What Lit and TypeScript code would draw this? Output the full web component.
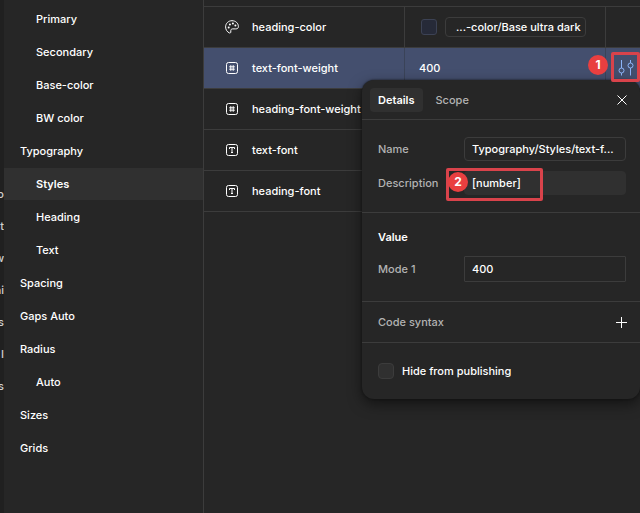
import { LitElement, html, svg, css } from "lit";
import { customElement, state } from "lit/decorators.js";
import { classMap } from "lit/directives/class-map.js";

type Kind = "color" | "number" | "string";

interface Group {
  name: string;
  nested?: boolean;
}

interface Variable {
  kind: Kind;
  name: string;
  value: string;
  alias?: boolean;
}

const GROUPS: Group[] = [
  { name: "Primary", nested: true },
  { name: "Secondary", nested: true },
  { name: "Base-color", nested: true },
  { name: "BW color", nested: true },
  { name: "Typography" },
  { name: "Styles", nested: true },
  { name: "Heading", nested: true },
  { name: "Text", nested: true },
  { name: "Spacing" },
  { name: "Gaps Auto" },
  { name: "Radius" },
  { name: "Auto", nested: true },
  { name: "Sizes" },
  { name: "Grids" },
];

const VARIABLES: Variable[] = [
  { kind: "color", name: "heading-color", value: "...-color/Base ultra dark", alias: true },
  { kind: "number", name: "text-font-weight", value: "400" },
  { kind: "number", name: "heading-font-weight", value: "" },
  { kind: "string", name: "text-font", value: "" },
  { kind: "string", name: "heading-font", value: "" },
];

const LAYERS = ["o", "nt", "w", "ai", "s", "I", "s"];

const box = svg`<rect x="1.5" y="1.5" width="11" height="11" rx="2" />`;

const KIND_ICONS = {
  color: svg`
    <path d="M7 .7C3.400 .7 .6 3.400 .6 6.900c0 2.700 1.500 5 3.700 6 .8.400 1.500-.1 1.500-.9v-1.400c0-1 .7-1.700 1.700-1.700h3.300c1.500 0 2.600-.8 2.600-2.300C13.400 3.200 10.600 .7 7 .7z" />
    <g class="dots"><circle cx="3.700" cy="7.400" r="1" /><circle cx="4.900" cy="4.500" r="1" /><circle cx="7.900" cy="3.500" r="1" /><circle cx="10.400" cy="5.600" r="1" /></g>`,
  number: svg`${box}<path d="M5.800 4.200v5.600M8.200 4.200v5.600M4.200 5.800h5.600M4.200 8.200h5.600" />`,
  string: svg`${box}<path d="M4.500 6V4.500h5V6M7 4.500v5M6 9.500h2" />`,
};

@customElement("app-root")
export class AppRoot extends LitElement {
  @state() private group = "Styles";
  @state() private selected = "text-font-weight";

  static styles = css`
    :host {
      display: grid;
      grid-template-columns: 4px 200px minmax(0, 1fr);
      position: relative;
      min-height: 100vh;
      overflow: hidden;
      background: #262626;
      color: #fff;
      font: 500 11px/16px Inter, "Liberation Sans", sans-serif;
    }
    * { box-sizing: border-box; }
    button, input {
      font: inherit;
      color: inherit;
      margin: 0;
      border: 0;
      background: none;
      padding: 0;
    }
    svg {
      display: block;
      fill: none;
      stroke: currentColor;
    }
    .canvas {
      background: #202020;
      color: #d0d0d0;
      overflow: hidden;
      padding-top: 178px;
    }
    .layer {
      display: flex;
      justify-content: flex-end;
      height: 32px;
      align-items: center;
    }
    .groups {
      display: flex;
      flex-direction: column;
      gap: 1px;
      padding-top: 3px;
      border-right: 1px solid #3c3c3c;
    }
    .group {
      height: 32px;
      padding-left: 16px;
      text-align: left;
    }
    .group.nested { padding-left: 32px; }
    .group.current {
      background: #303030;
      font-weight: 600;
    }
    .table {
      width: 100%;
      border-collapse: separate;
      border-spacing: 0;
      table-layout: fixed;
    }
    .table-wrap { padding-top: 6px; }
    .col { width: 46.1%; }
    .cell {
      height: 41px;
      padding: 0 0 0 21px;
      border-bottom: 1px solid #3c3c3c;
      border-right: 1px solid #3c3c3c;
      text-align: left;
      font-weight: inherit;
      white-space: nowrap;
    }
    .cell.value { padding-left: 14px; }
    .cell.action {
      border-right: 0;
      padding-left: 12px;
    }
    .top { border-top: 1px solid #3c3c3c; height: 42px; }
    .selected .cell {
      background: #444f6e;
      border-right-color: #3a4358;
    }
    .line {
      display: flex;
      align-items: center;
    }
    .line.named { gap: 13px; }
    .line.alias { gap: 8px; padding-left: 2px; }
    .dots { fill: currentColor; stroke: none; }
    .swatch {
      width: 16px;
      height: 16px;
      border: 1px solid #3c4254;
      border-radius: 3px;
      background: #262a38;
    }
    .chip {
      height: 20px;
      padding: 0 4px 0 10px;
      border: 1px solid #3c3c3c;
      border-radius: 4px;
      line-height: 18px;
    }
    .tune { display: block; color: #8db4f8; }
    .details {
      position: absolute;
      top: 80px;
      right: 0;
      width: 278px;
      border-radius: 12px;
      background: #262626;
      box-shadow: 0 0 2px #111, 0 5px 14px rgba(0, 0, 0, 0.5);
    }
    .tabs {
      display: flex;
      align-items: center;
      gap: 5px;
      height: 40px;
      padding: 0 12px 0 8px;
      border-bottom: 1px solid #3c3c3c;
    }
    .tab {
      height: 24px;
      padding: 0 8px;
      border-radius: 4px;
      color: #b3b3b3;
    }
    .tab.current {
      background: #303030;
      color: #fff;
      font-weight: 600;
    }
    .close { margin-left: auto; }
    .section {
      display: flex;
      flex-direction: column;
      padding: 0 14px 0 16px;
      border-bottom: 1px solid #3c3c3c;
    }
    .section.identity { gap: 10px; padding-top: 17px; padding-bottom: 17px; }
    .section.values { gap: 11px; padding-top: 16px; padding-bottom: 19px; }
    .section.syntax {
      flex-direction: row;
      align-items: center;
      justify-content: space-between;
      height: 41px;
      padding-right: 12px;
    }
    .section.publish {
      border: 0;
      height: 56px;
      justify-content: center;
    }
    .field {
      display: grid;
      grid-template-columns: 86px minmax(0, 1fr);
      align-items: center;
    }
    .muted { color: #b3b3b3; }
    .heading {
      margin: 0;
      font-size: 11px;
      font-weight: 600;
    }
    .input {
      width: 100%;
      height: 24px;
      padding: 0 7px;
      border: 1px solid #3c3c3c;
      border-radius: 4px;
      text-overflow: ellipsis;
    }
    .input.filled {
      background: #303030;
      border-color: #303030;
    }
    .input.square {
      height: 26px;
      border-radius: 1px;
    }
    .check {
      display: flex;
      align-items: center;
      gap: 8px;
    }
    .tick {
      appearance: none;
      width: 16px;
      height: 16px;
      border: 1px solid #3c3c3c;
      border-radius: 4px;
      background: #303030;
    }
    .frame {
      position: absolute;
      border: 3px solid #d9434b;
      border-radius: 2px;
    }
    .frame.one { top: 52px; right: 0; width: 29px; height: 30px; }
    .frame.two { top: 168px; right: 97px; width: 97px; height: 33px; }
    .mark {
      position: absolute;
      width: 20px;
      height: 20px;
      border-radius: 50%;
      background: #e93f40;
      text-align: center;
      font-size: 12px;
      font-weight: 700;
      line-height: 20px;
    }
    .mark.one { top: 55px; right: 32px; }
    .mark.two { top: 172px; right: 172px; }
  `;

  private renderValue(v: Variable) {
    return v.alias
      ? html`<div class="line alias"><span class="swatch"></span><span class="chip">${v.value}</span></div>`
      : v.value;
  }

  private renderRow(v: Variable, index: number) {
    const top = index === 0;
    const on = v.name === this.selected;
    return html`
      <tr class=${classMap({ selected: on })} @click=${() => (this.selected = v.name)}>
        <th scope="row" class=${classMap({ cell: true, top })}>
          <div class="line named">
            <svg width="14" height="14" viewBox="0 0 14 14">${KIND_ICONS[v.kind]}</svg>${v.name}
          </div>
        </th>
        <td class=${classMap({ cell: true, value: true, top })}>${this.renderValue(v)}</td>
        <td class=${classMap({ cell: true, action: true, top })}>
          ${on
            ? html`<button class="tune" aria-label="Edit variable">
                <svg width="16" height="18" viewBox="0 0 16 18">
                  <path d="M3.500 1v8M3.500 14v2.500M12.500 1v3M12.500 9v7.500" />
                  <circle cx="3.500" cy="11.500" r="2.500" /><circle cx="12.500" cy="6.500" r="2.500" />
                </svg>
              </button>`
            : ""}
        </td>
      </tr>
    `;
  }

  render() {
    return html`
      <div class="canvas">${LAYERS.map((l) => html`<span class="layer">${l}</span>`)}</div>
      <nav class="groups" aria-label="Groups">
        ${GROUPS.map(
          (g) => html`<button
            class=${classMap({ group: true, nested: !!g.nested, current: g.name === this.group })}
            @click=${() => (this.group = g.name)}
          >${g.name}</button>`
        )}
      </nav>
      <main class="table-wrap">
        <table class="table">
          <colgroup><col class="col" /><col class="col" /><col /></colgroup>
          <tbody>${VARIABLES.map((v, i) => this.renderRow(v, i))}</tbody>
        </table>
      </main>
      <section class="details" aria-label="Variable details">
        <header class="tabs">
          <button class="tab current">Details</button>
          <button class="tab">Scope</button>
          <button class="close" aria-label="Close">
            <svg width="12" height="12" viewBox="0 0 12 12"><path d="M1.500 1.500l9 9M10.500 1.500l-9 9" /></svg>
          </button>
        </header>
        <div class="section identity">
          <div class="field">
            <label class="muted" for="name">Name</label>
            <input class="input" id="name" value="Typography/Styles/text-f..." />
          </div>
          <div class="field">
            <label class="muted" for="description">Description</label>
            <input class="input filled" id="description" value="[number]" />
          </div>
        </div>
        <div class="section values">
          <h2 class="heading">Value</h2>
          <div class="field">
            <label class="muted" for="mode">Mode 1</label>
            <input class="input square" id="mode" value="400" />
          </div>
        </div>
        <div class="section syntax">
          <span class="muted">Code syntax</span>
          <button aria-label="Add code syntax">
            <svg width="13" height="13" viewBox="0 0 13 13"><path d="M6.500 1v11M1 6.500h11" /></svg>
          </button>
        </div>
        <div class="section publish">
          <label class="check"><input class="tick" type="checkbox" />Hide from publishing</label>
        </div>
      </section>
      <div class="frame one"></div>
      <div class="mark one">1</div>
      <div class="frame two"></div>
      <div class="mark two">2</div>
    `;
  }
}
